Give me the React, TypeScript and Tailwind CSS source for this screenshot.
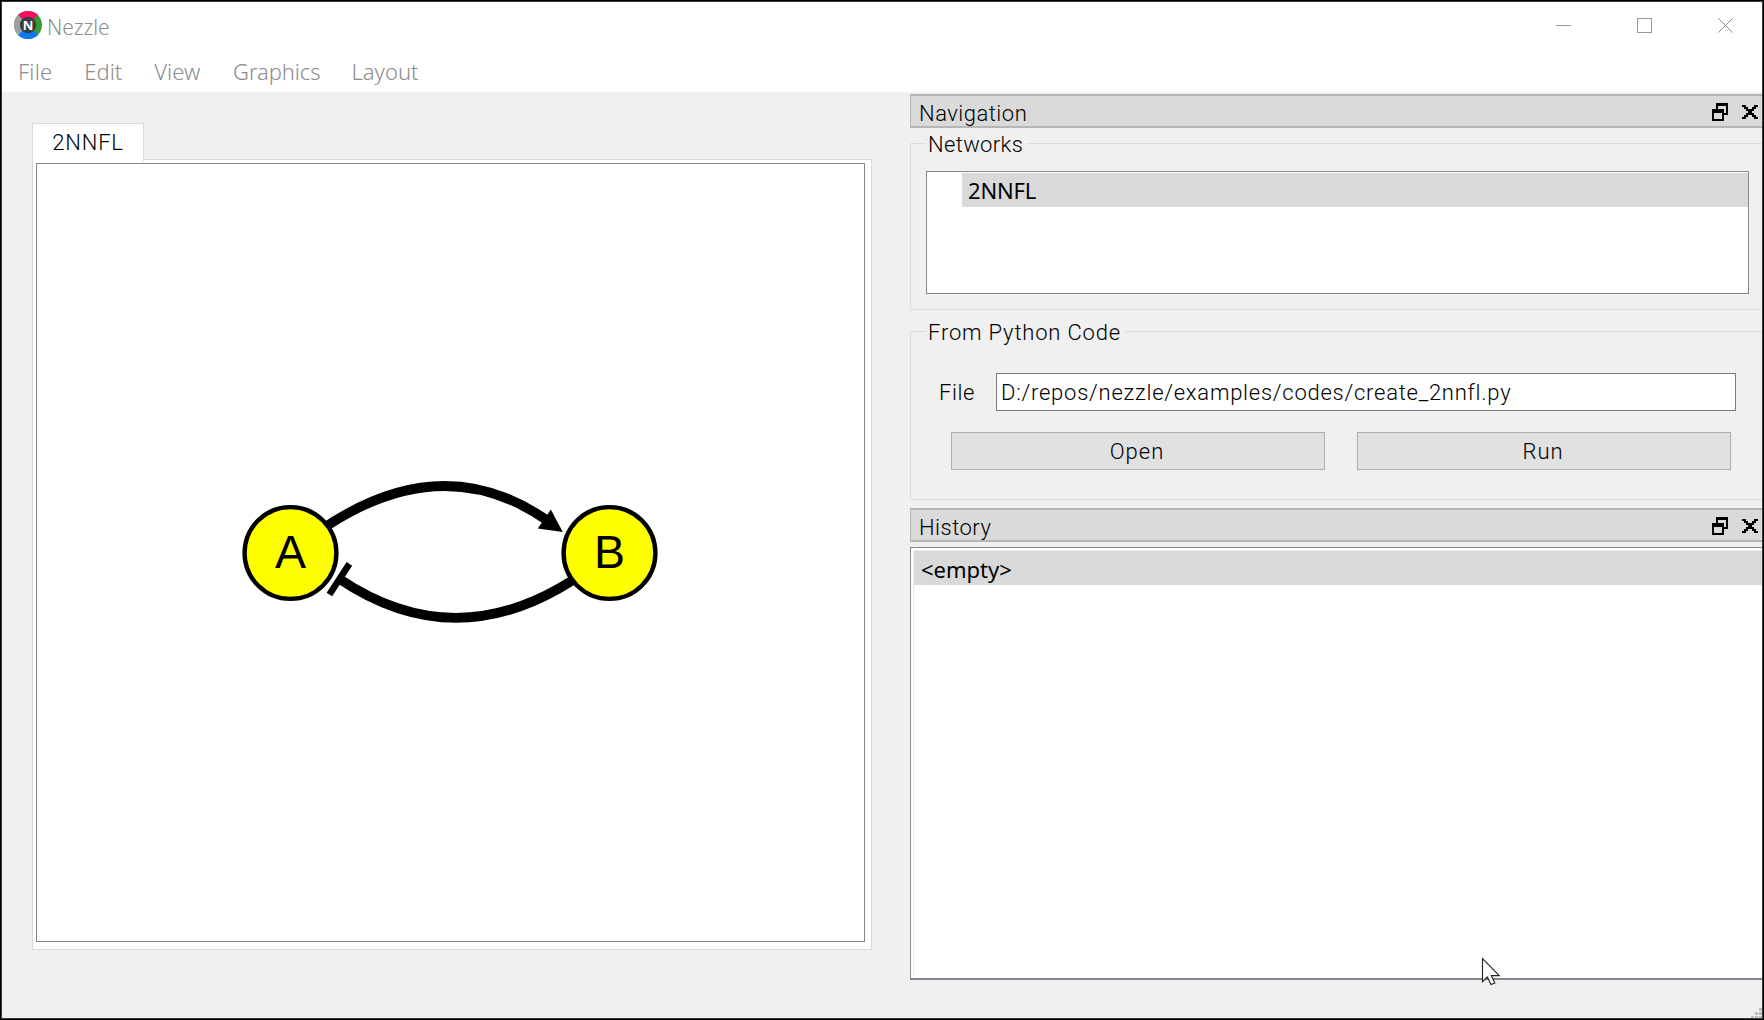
import type { ReactNode } from "react";

const UI = "font-['Roboto',sans-serif] font-light text-[22px] leading-none text-black whitespace-nowrap";
const SYS = "font-['Noto_Sans',sans-serif] leading-none whitespace-nowrap";

function Logo() {
  return (
    <svg width="28" height="28" viewBox="-14 -14 28 28">
      <circle r="14" fill="#369a36" />
      <path d="M0 0L-9.9-9.9A14 14 0 0 1 9.9-9.9Z" fill="#ff0a63" />
      <path d="M0 0L-9.9 9.9A14 14 0 0 0 9.9 9.9Z" fill="#0a78fa" />
      <path d="M0 0L-9.9-9.9A14 14 0 0 0-9.9 9.9Z" fill="#a0a0a4" />
      <circle r="8.2" fill="#3c3c3e" />
      <text x="0" y="4.7" textAnchor="middle" fill="#fff" className="font-['Open_Sans',sans-serif] text-[13px] font-bold">
        N
      </text>
    </svg>
  );
}

function WindowControls() {
  return (
    <div className="ml-auto flex gap-[66px] pr-[29px]">
      <svg width="15" height="15" viewBox="0 0 15 15" stroke="#999" fill="none">
        <path d="M0 7.5H15" />
      </svg>
      <svg width="15" height="15" viewBox="0 0 15 15" stroke="#999" fill="none">
        <rect x="0.5" y="0.5" width="14" height="14" />
      </svg>
      <svg width="15" height="15" viewBox="0 0 15 15" stroke="#8c8c8c" fill="none">
        <path d="M0.3 0.3L14.7 14.7M14.7 0.3L0.3 14.7" />
      </svg>
    </div>
  );
}

function DockTitle({ children }: { children: ReactNode }) {
  return (
    <div className="flex h-[34px] shrink-0 items-center border-y-2 border-l border-[#b6b6b6] bg-[#dadada] pr-1 pl-2">
      <span className={`${UI} pt-[5px] tracking-[0.5px]`}>{children}</span>
      <svg className="mt-[2px] ml-auto" width="16" height="18" viewBox="0 0 16 18" shapeRendering="crispEdges">
        <path d="M4 0H16V12H4Z" fill="#000" />
        <path d="M6 3H14V10H6Z" fill="#dadada" />
        <path d="M0 6H12V18H0Z" fill="#000" />
        <path d="M2 10H10V16H2Z" fill="#dadada" />
      </svg>
      <svg className="mt-[2px] ml-[14px]" width="16" height="14" viewBox="0 0 16 14" shapeRendering="crispEdges">
        <path d="M0 0h4v2h-4zM12 0h4v2h-4zM2 2h4v2h-4zM10 2h4v2h-4zM4 4h8v2h-8zM6 6h4v2h-4zM4 8h8v2h-8zM2 10h4v2h-4zM10 10h4v2h-4zM0 12h4v2h-4zM12 12h4v2h-4z" />
      </svg>
    </div>
  );
}

function Legend({ children }: { children: ReactNode }) {
  return <span className={`${UI} absolute -top-[11px] left-[15px] bg-[#f0f0f0] py-px pr-[4px] pl-[2px]`}>{children}</span>;
}

function Button({ children }: { children: ReactNode }) {
  return (
    <button className={`${UI} h-[38px] w-[374px] border border-[#adadad] bg-[#e1e1e1] pt-[2px] pr-[2px] tracking-[1px]`}>
      {children}
    </button>
  );
}

function NetworkGraph() {
  return (
    <svg width="827" height="777" viewBox="37 164 827 777" className="block">
      <g fill="none" stroke="#000" strokeWidth="9.6">
        <path d="M290.5 553Q429 437.5 548 521" />
        <path d="M609.5 553Q472 668 339.5 579" />
        <path d="M349.4 563.9L329.4 594.5" strokeWidth="6.6" />
      </g>
      <path d="M550.8 509.5L562.8 532L537.8 528.6Z" />
      <g fill="#ff0" stroke="#000" strokeWidth="4.4">
        <circle cx="290.5" cy="553" r="45.9" />
        <circle cx="609.5" cy="553" r="45.9" />
      </g>
      <g textAnchor="middle" className="font-['Liberation_Sans',Arial,sans-serif] text-[46.5px]">
        <text x="290.5" y="568">A</text>
        <text x="609.5" y="568">B</text>
      </g>
    </svg>
  );
}

export default function App() {
  return (
    <div className="h-[1020px] w-[1764px] overflow-hidden border border-black">
      <div className="relative flex h-full flex-col border border-[#38383a] bg-[#f0f0f0]">
        <header className="shrink-0 bg-white text-[#8c8c8c]">
          <div className="flex h-[46px] items-center pl-3">
            <Logo />
            <span className={`${SYS} ml-[5px] pt-[5px] text-[21px] font-light`}>Nezzle</span>
            <WindowControls />
          </div>
          <nav className={`${SYS} flex h-11 items-center gap-8 pt-px pl-4 text-[22px] font-light`}>
            <span className="tracking-[0.2px]">File</span>
            <span>Edit</span>
            <span>View</span>
            <span className="ml-px tracking-[-0.1px]">Graphics</span>
            <span className="-ml-px">Layout</span>
          </nav>
        </header>

        <div className="flex min-h-0 flex-1">
          <main className="w-[908px] shrink-0 pt-[31px] pl-[30px]">
            <div className="relative -mb-[2px] flex h-[38px] w-[112px] items-center justify-center border border-b-0 border-[#d9d9d9] bg-white">
              <span className={`${UI} tracking-[0.8px]`}>2NNFL</span>
            </div>
            <div className="h-[791px] w-[840px] border border-[#d9d9d9] bg-white pt-[3px] pl-[3px]">
              <div className="h-[779px] w-[829px] border border-[#828790]">
                <NetworkGraph />
              </div>
            </div>
          </main>

          <aside className="flex flex-1 flex-col pt-[2px]">
            <DockTitle>Navigation</DockTitle>
            <section className="relative mt-[15px] h-[167px] shrink-0 border-y border-l border-[#dcdcdc] pt-[27px] pl-[15px]">
              <Legend>
                <span className="tracking-[0.35px]">Networks</span>
              </Legend>
              <div className="h-[123px] w-[823px] border border-[#828790] bg-white pt-px">
                <div className={`${SYS} ml-[35px] flex h-[34px] items-center bg-[#d9d9d9] pl-[6px] text-[22px] tracking-[-0.2px] text-black`}>
                  2NNFL
                </div>
              </div>
            </section>

            <section className="relative mt-[21px] h-[169px] shrink-0 border-y border-l border-[#dcdcdc] pt-[41px]">
              <Legend>
                <span className="tracking-[0.82px]">From Python Code</span>
              </Legend>
              <div className="flex items-center pl-7">
                <span className={`${UI} w-[57px] pt-[2px] tracking-[0.6px]`}>File</span>
                <div className={`${UI} flex h-[38px] w-[740px] items-center border border-[#7a7a7a] bg-white pt-[2px] pl-1 tracking-[0.75px]`}>
                  D:/repos/nezzle/examples/codes/create_2nnfl.py
                </div>
              </div>
              <div className="mt-[21px] flex gap-8 pl-10">
                <Button>Open</Button>
                <Button>Run</Button>
              </div>
            </section>

            <div className="mt-2 flex flex-col">
              <DockTitle>History</DockTitle>
            </div>
            <div className="mt-[5px] h-[433px] shrink-0 border-t border-b-2 border-l border-[#828790] bg-white pt-[2px] pl-[2px]">
              <div className="h-[426px] border-t border-l border-[#ececec]">
                <div className={`${SYS} flex h-[34px] items-center bg-[#d9d9d9] pt-px pl-[7px] text-[22px] text-black`}>
                  &lt;empty&gt;
                </div>
              </div>
            </div>
          </aside>
        </div>

        <svg className="absolute right-0 bottom-0" width="11" height="10" viewBox="0 0 11 10" fill="#bcbcbc" shapeRendering="crispEdges">
          <path d="M8 0h3v3h-3zM4 4h3v3h-3zM8 4h3v3h-3zM0 8h3v3h-3zM4 8h3v3h-3zM8 8h3v3h-3z" />
        </svg>

        <svg className="absolute top-[955px] left-[1479px]" width="20" height="29" viewBox="0 0 20 29">
          <path
            d="M1.5 1.7V24.6L6.3 20L10 27.5L13.8 26L10.4 18.6H18.3Z"
            fill="#fff"
            stroke="#222"
            strokeWidth="1.1"
          />
        </svg>
      </div>
    </div>
  );
}
